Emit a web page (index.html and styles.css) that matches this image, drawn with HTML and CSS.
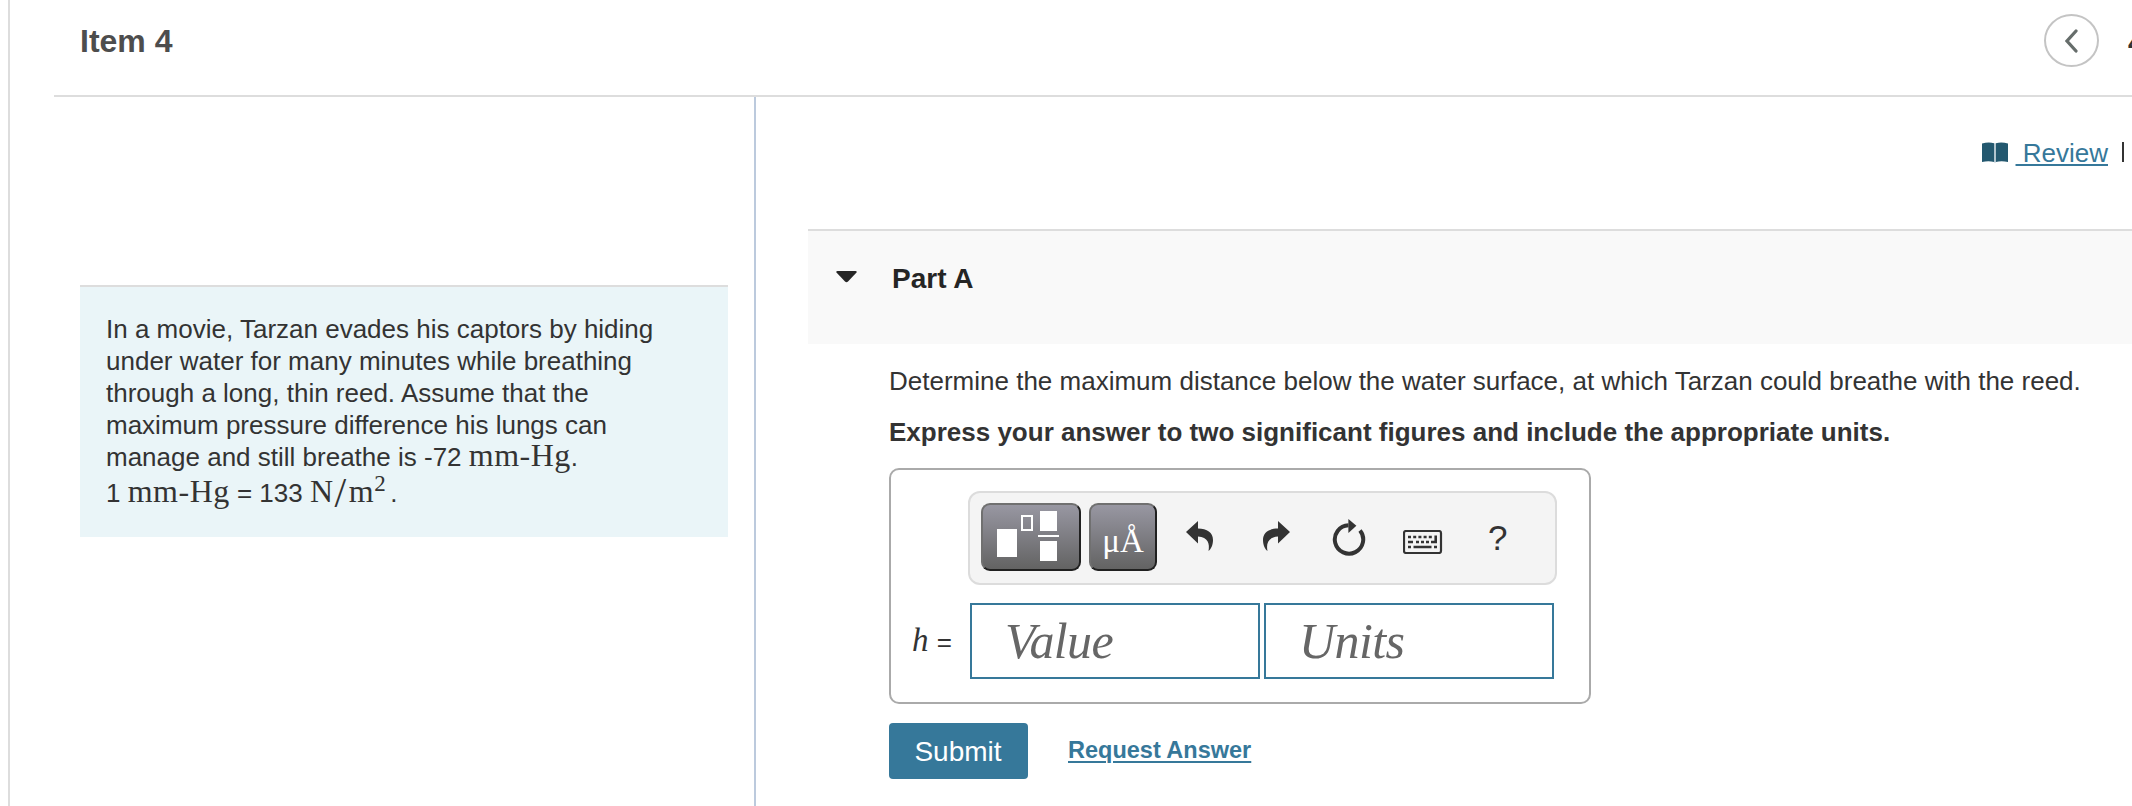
FILE: index.html
```html
<!DOCTYPE html>
<html lang="en">

<head>
    <meta charset="UTF-8">
    <meta name="viewport" content="width=device-width, initial-scale=1.0">
    <title>Item 4</title>
    <link rel="stylesheet" href="styles.css">
</head>

<body>
    <div class="page">
        <header class="item-header">
            <h1>Item 4</h1>
            <nav class="item-nav">
                <button type="button" class="prev" aria-label="Previous item">
                    <svg width="14" height="26" viewBox="0 0 14 26"><path d="M11 3 L2 13 L11 23" fill="none" stroke="#666d6b" stroke-width="3.2" stroke-linecap="round" stroke-linejoin="miter"/></svg>
                </button>
                <span class="count">4</span>
            </nav>
        </header>

        <main class="columns">
            <section class="left">
                <div class="problem">
                    <div class="line">In a movie, Tarzan evades his captors by hiding</div>
                    <div class="line">under water for many minutes while breathing</div>
                    <div class="line">through a long, thin reed. Assume that the</div>
                    <div class="line">maximum pressure difference his lungs can</div>
                    <div class="line">manage and still breathe is -72 <span class="math">mm-Hg</span>.</div>
                    <div class="line last">1 <span class="math">mm-Hg</span> = 133 <span class="math">N<span class="slash">/</span>m<sup>2</sup></span><span class="stop">.</span></div>
                </div>
            </section>

            <section class="right">
                <div class="links">
                    <svg class="book" width="26" height="21" viewBox="0 0 26 21"><path d="M0 1.5 Q6.5 -0.5 12.2 1.2 V20 Q6.5 18.6 0 20 Z M13.8 1.2 Q19.5 -0.5 26 1.5 V20 Q19.5 18.6 13.8 20 Z" fill="#23586f"/><path d="M13 1.5 V20.5" stroke="#a9bfca" stroke-width="1.6"/></svg>
                    <a href="#">&nbsp;Review</a>
                    <span class="bar"></span>
                </div>

                <div class="part">
                    <svg width="22" height="12" viewBox="0 0 22 12"><path d="M1.5 0 H19.5 Q21.5 0.4 20.3 1.8 L12 10.5 Q10.5 12 9 10.5 L0.7 1.8 Q-0.5 0.4 1.5 0 Z" fill="#252525"/></svg>
                    <h2>Part A</h2>
                </div>

                <div class="question">
                    <p class="ask">Determine the maximum distance below the water surface, at which Tarzan could breathe with the reed.</p>
                    <p class="hint">Express your answer to two significant figures and include the appropriate units.</p>

                    <div class="answer">
                        <div class="toolbar">
                            <button type="button" class="tool templates" aria-label="Templates">
                                <svg width="64" height="52" viewBox="0 0 64 52">
                                    <rect x="1" y="19" width="20" height="28" fill="#fff"/>
                                    <rect x="26" y="6" width="10" height="14" fill="none" stroke="#fff" stroke-width="2"/>
                                    <rect x="44" y="1" width="17" height="20" fill="#fff"/>
                                    <rect x="42" y="25" width="21" height="2" fill="#fff"/>
                                    <rect x="44" y="31" width="17" height="20" fill="#fff"/>
                                </svg>
                            </button>
                            <button type="button" class="tool symbols">&mu;&Aring;</button>
                            <svg class="undo" width="28" height="32" viewBox="0 0 28 32"><path d="M0 12 L12 1 V8.5 C21 8.500 27 12.500 27 20 C27 25 25 29 22.500 31 C24 24 22 17 12 16.500 V23.500 Z" fill="#333"/></svg>
                            <svg class="redo" width="28" height="32" viewBox="0 0 28 32"><path d="M28 12 L16 1 V8.5 C7 8.500 1 12.500 1 20 C1 25 3 29 5.500 31 C4 24 6 17 16 16.500 V23.500 Z" fill="#333"/></svg>
                            <svg class="reset" width="34" height="38" viewBox="0 0 34 38"><path d="M28 11.5 A14.2 14.2 0 1 1 16.5 6.3" fill="none" stroke="#333" stroke-width="4"/><path d="M16.4 0 L24.4 6.8 L16.4 14 Z" fill="#333"/></svg>
                            <svg class="keyboard" width="40" height="24" viewBox="0 0 40 24"><rect x="1" y="1" width="37" height="22" rx="2" fill="none" stroke="#333" stroke-width="2.2"/><path d="M5 7 H31" stroke="#333" stroke-width="2.6" stroke-dasharray="3 2.2"/><path d="M5 12 H10 M13 12 h3 M18 12 h3 M23 12 h3 M28 12 H34 M5 17 h3 M10.5 17 H28.5 M31 17 h3" stroke="#333" stroke-width="2.4"/><path d="M32.7 5.5 V13" stroke="#333" stroke-width="2.6"/></svg>
                            <span class="help">?</span>
                        </div>
                        <div class="entry">
                            <span class="var"><i>h</i> =</span>
                            <div class="field value">Value</div>
                            <div class="field units">Units</div>
                        </div>
                    </div>

                    <div class="actions">
                        <button type="submit" class="submit">Submit</button>
                        <a href="#" class="request">Request Answer</a>
                    </div>
                </div>
            </section>
        </main>
    </div>
</body>

</html>
```
FILE: styles.css
```css
* {
    box-sizing: border-box;
}

body {
    margin: 0;
    height: 806px;
    overflow: hidden;
    background: #fff;
    color: #333;
    font-family: "Liberation Sans", Arial, sans-serif;
    font-size: 26px;
}

h1,
h2,
p {
    margin: 0;
}

svg {
    display: block;
    flex: none;
}

button {
    font-family: inherit;
    padding: 0;
}

.page {
    height: 806px;
    margin-left: 8px;
    padding-left: 44px;
    border-left: 2px solid #ddd;
}

.item-header {
    display: flex;
    justify-content: space-between;
    height: 97px;
    padding-left: 26px;
    border-bottom: 2px solid #ddd;
}

.item-header h1 {
    padding-top: 23px;
    font-size: 32px;
    line-height: 36px;
    color: #4d4d4d;
}

.item-nav {
    display: flex;
    width: 88px;
    padding-top: 14px;
}

.prev {
    display: flex;
    flex: none;
    align-items: center;
    justify-content: center;
    width: 55px;
    height: 53px;
    border: 2px solid #c4c4c4;
    border-radius: 50%;
    background: #fff;
}

.count {
    padding-left: 29px;
    font-size: 28px;
    font-weight: bold;
    line-height: 58px;
}

.columns {
    display: flex;
    height: 709px;
}

.left {
    flex: none;
    width: 702px;
    padding: 188px 26px 0 26px;
    border-right: 2px solid #bccadd;
}

.problem {
    height: 252px;
    padding: 26px 26px 0;
    border-top: 2px solid #ddd;
    background: #eaf5f8;
}

.line {
    height: 32px;
    line-height: 32px;
    white-space: nowrap;
}

.line.last {
    height: 40px;
    line-height: 40px;
}

.math {
    font-family: "Liberation Serif", "Times New Roman", serif;
    font-size: 32px;
    line-height: 1px;
    letter-spacing: 0.5px;
}

.math sup {
    font-size: 23px;
    line-height: 1px;
    vertical-align: 11px;
}

.slash {
    margin: 0 2px 0 1px;
    font-size: 42px;
    vertical-align: -5px;
}

.stop {
    margin-left: 4px;
}

.right {
    flex: 1;
    min-width: 0;
    padding-left: 52px;
}

.links {
    display: flex;
    height: 132px;
    padding: 45px 8px 0 0;
    justify-content: flex-end;
}

.links a {
    margin-left: 8px;
    line-height: 28px;
    margin-top: -3px;
    color: #36789a;
    text-decoration-thickness: 2px;
    text-underline-offset: 2px;
}

.bar {
    width: 2px;
    height: 20px;
    margin-left: 14px;
    background: #333;
}

.part {
    display: flex;
    height: 115px;
    padding: 40px 0 0 28px;
    border-top: 2px solid #ddd;
    background: #f9f9f9;
}

.part h2 {
    margin: -8px 0 0 34px;
    font-size: 28px;
    line-height: 32px;
    color: #252525;
}

.question {
    padding: 21px 0 0 81px;
}

.ask,
.hint {
    line-height: 32px;
    white-space: nowrap;
}

.hint {
    margin-top: 19px;
    font-weight: bold;
}

.answer {
    width: 702px;
    height: 236px;
    margin-top: 20px;
    padding: 21px 0 0 21px;
    border: 2px solid #aaa;
    border-radius: 10px;
}

.toolbar {
    display: flex;
    width: 589px;
    height: 94px;
    margin-left: 56px;
    padding: 10px 0 0 11px;
    border: 2px solid #dcdcdc;
    border-radius: 12px;
    background: #f4f4f4;
}

.tool {
    display: flex;
    flex: none;
    align-items: center;
    justify-content: center;
    width: 100px;
    height: 68px;
    border: 2px solid;
    border-color: #707070 #202020 #202020 #707070;
    border-radius: 9px;
    background: linear-gradient(#9897a2, #636363);
    color: #fff;
}

.templates svg {
    margin: 0 6px 2px 0;
}

.symbols {
    width: 68px;
    margin-left: 8px;
    padding-top: 8px;
    font-family: "Liberation Serif", serif;
    font-size: 33px;
}

.undo {
    margin: 17px 0 0 29px;
}

.redo {
    margin: 17px 0 0 48px;
}

.reset {
    margin: 16px 0 0 42px;
}

.keyboard {
    margin: 27px 0 0 37px;
}

.help {
    margin: 14px 0 0 45px;
    font-size: 35px;
    line-height: 42px;
}

.entry {
    display: flex;
    margin-top: 18px;
}

.var {
    width: 58px;
    line-height: 74px;
    white-space: nowrap;
}

.var i {
    margin-right: 1px;
    font-family: "Liberation Serif", serif;
    font-size: 33px;
}

.field {
    width: 290px;
    height: 76px;
    padding-left: 33px;
    border: 2px solid #36789a;
    color: #666;
    font-family: "Liberation Serif", serif;
    font-size: 50px;
    font-style: italic;
    line-height: 72px;
    letter-spacing: -0.6px;
}

.units {
    margin-left: 4px;
}

.actions {
    display: flex;
    margin-top: 19px;
}

.submit {
    width: 139px;
    height: 56px;
    padding: 1px 1px 0 0;
    border: 0;
    border-radius: 4px;
    background: #36789a;
    color: #fff;
    font-size: 28px;
}

.request {
    margin-left: 40px;
    color: #36789a;
    font-size: 23.5px;
    font-weight: bold;
    line-height: 54px;
    text-decoration-thickness: 2px;
    text-underline-offset: 3px;
}
```
